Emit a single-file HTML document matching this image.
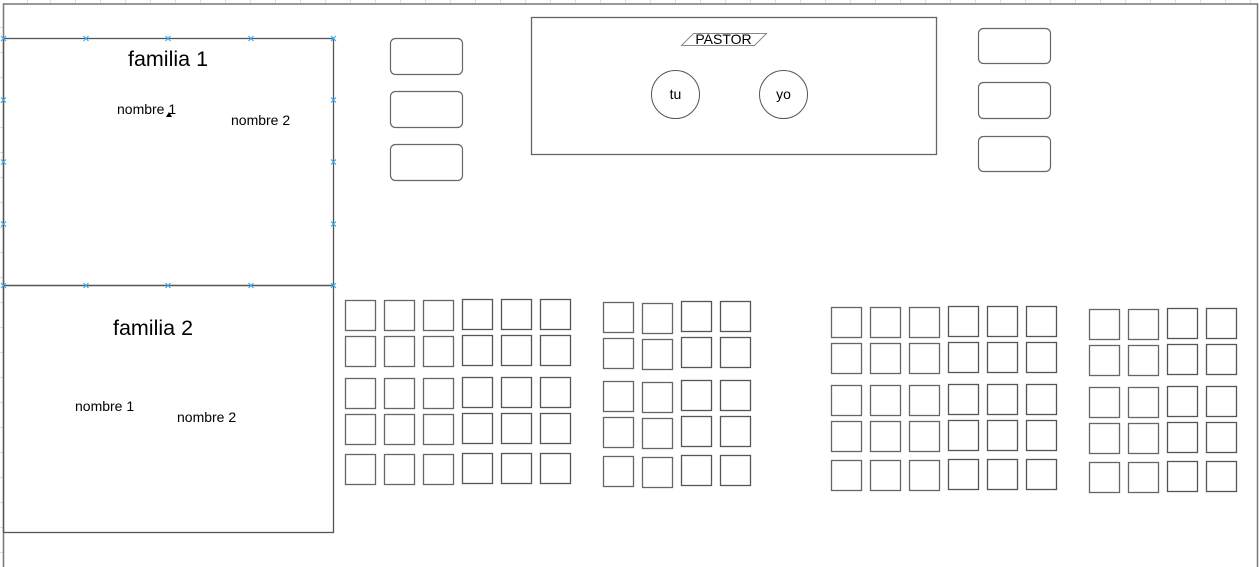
<!DOCTYPE html>
<html><head><meta charset="utf-8"><style>
html,body{margin:0;padding:0;background:#fff;width:1259px;height:567px;overflow:hidden}
svg{display:block}
text{font-family:"Liberation Sans",Arial,sans-serif;fill:#000}
</style></head><body>
<svg width="1259" height="567" viewBox="0 0 1259 567" xmlns="http://www.w3.org/2000/svg">
<defs>
<g id="rA" fill="none" stroke="#666" stroke-width="1.3">
<rect x="345.5" y="1.5" width="30" height="30"/><rect x="384.5" y="1.5" width="30" height="30"/><rect x="423.5" y="1.5" width="30" height="30"/>
<rect x="462.5" y="0.5" width="30" height="30" stroke="#555"/><rect x="501.5" y="0.5" width="30" height="30" stroke="#555"/><rect x="540.5" y="0.5" width="30" height="30" stroke="#555"/>
</g>
<g id="rB" fill="none" stroke="#666" stroke-width="1.3">
<rect x="603.5" y="0.5" width="30" height="30"/><rect x="642.5" y="1.5" width="30" height="30"/>
<rect x="681.5" y="-0.5" width="30" height="30" stroke="#555"/><rect x="720.5" y="-0.5" width="30" height="30" stroke="#555"/>
</g>
<g id="rC" fill="none" stroke="#666" stroke-width="1.3">
<rect x="831.5" y="0.5" width="30" height="30"/><rect x="870.5" y="0.5" width="30" height="30"/><rect x="909.5" y="0.5" width="30" height="30"/>
<rect x="948.5" y="-0.5" width="30" height="30" stroke="#555"/><rect x="987.5" y="-0.5" width="30" height="30" stroke="#555"/><rect x="1026.5" y="-0.5" width="30" height="30" stroke="#555"/>
</g>
<g id="rD" fill="none" stroke="#666" stroke-width="1.3">
<rect x="1089.5" y="0.5" width="30" height="30"/><rect x="1128.5" y="0.5" width="30" height="30"/>
<rect x="1167.5" y="-0.5" width="30" height="30" stroke="#555"/><rect x="1206.5" y="-0.5" width="30" height="30" stroke="#555"/>
</g>
<g id="xm" stroke="#3fa9f5" stroke-width="1.2"><path d="M-2.5,-2.5L2.5,2.5M-2.5,2.5L2.5,-2.5"/></g>
</defs>
<g stroke="#ddd" stroke-width="1">
<path d="M27.5,0V3M50.5,0V3M75.5,0V3M100.5,0V3M125.5,0V3M150.5,0V3M175.5,0V3M200.5,0V3M225.5,0V3M250.5,0V3M275.5,0V3M300.5,0V3M325.5,0V3M350.5,0V3M375.5,0V3M400.5,0V3M425.5,0V3M450.5,0V3M475.5,0V3M500.5,0V3M525.5,0V3M550.5,0V3M575.5,0V3M600.5,0V3M625.5,0V3M650.5,0V3M675.5,0V3M700.5,0V3M725.5,0V3M750.5,0V3M775.5,0V3M800.5,0V3M825.5,0V3M850.5,0V3M875.5,0V3M900.5,0V3M925.5,0V3M950.5,0V3M975.5,0V3M1000.5,0V3M1025.5,0V3M1050.5,0V3M1075.5,0V3M1100.5,0V3M1125.5,0V3M1150.5,0V3M1175.5,0V3M1200.5,0V3M1225.5,0V3M1250.5,0V3"/>
<path d="M0,27.5H3M0,52.5H3M0,77.5H3M0,102.5H3M0,127.5H3M0,152.5H3M0,177.5H3M0,202.5H3M0,227.5H3M0,252.5H3M0,277.5H3M0,302.5H3M0,327.5H3M0,352.5H3M0,377.5H3M0,402.5H3M0,427.5H3M0,452.5H3M0,477.5H3M0,502.5H3M0,527.5H3M0,552.5H3"/>
</g>
<path d="M3.5,567V4H1257.5V567" fill="none" stroke="#777" stroke-width="1.5"/>
<rect x="3.5" y="38.5" width="330" height="247" fill="none" stroke="#555" stroke-width="1.3"/>
<rect x="3.5" y="285.5" width="330" height="247" fill="none" stroke="#555" stroke-width="1.3"/>
<use href="#xm" x="3.5" y="38.5"/><use href="#xm" x="86" y="38.5"/><use href="#xm" x="168" y="38.5"/><use href="#xm" x="251" y="38.5"/><use href="#xm" x="333.5" y="38.5"/>
<use href="#xm" x="3.5" y="285.5"/><use href="#xm" x="86" y="285.5"/><use href="#xm" x="168" y="285.5"/><use href="#xm" x="251" y="285.5"/><use href="#xm" x="333.5" y="285.5"/>
<use href="#xm" x="3.5" y="100"/><use href="#xm" x="3.5" y="162"/><use href="#xm" x="3.5" y="224"/>
<use href="#xm" x="333.5" y="100"/><use href="#xm" x="333.5" y="162"/><use href="#xm" x="333.5" y="224"/>
<text x="168" y="66" font-size="21.5" text-anchor="middle">familia 1</text>
<text x="117" y="114" font-size="14">nombre 1</text>
<path d="M166,117L169,112L172,117Z" fill="#000"/>
<text x="231" y="125" font-size="14">nombre 2</text>
<text x="153" y="335" font-size="21.5" text-anchor="middle">familia 2</text>
<text x="75" y="411" font-size="14">nombre 1</text>
<text x="177" y="422" font-size="14">nombre 2</text>
<g fill="none" stroke="#666" stroke-width="1.2">
<rect x="390.5" y="38.5" width="72" height="36" rx="5"/>
<rect x="390.5" y="91.5" width="72" height="36" rx="5"/>
<rect x="390.5" y="144.5" width="72" height="36" rx="5"/>
<rect x="978.5" y="28.5" width="72" height="35" rx="5"/>
<rect x="978.5" y="82.5" width="72" height="36" rx="5"/>
<rect x="978.5" y="136.5" width="72" height="35" rx="5"/>
</g>
<rect x="531.5" y="17.5" width="405" height="137" fill="none" stroke="#666" stroke-width="1.3"/>
<path d="M693.5,33.5H766.5L754.5,45.5H681.5Z" fill="#fff" stroke="#888" stroke-width="1"/>
<text x="723.5" y="44" font-size="14" text-anchor="middle">PASTOR</text>
<circle cx="675.5" cy="94.5" r="24" fill="none" stroke="#555" stroke-width="1"/>
<circle cx="783.5" cy="94.5" r="24" fill="none" stroke="#555" stroke-width="1"/>
<text x="675.5" y="99" font-size="14" text-anchor="middle">tu</text>
<text x="783.5" y="99" font-size="14" text-anchor="middle">yo</text>
<use href="#rA" y="299"/><use href="#rA" y="335"/><use href="#rA" y="377"/><use href="#rA" y="413"/><use href="#rA" y="453"/>
<use href="#rB" y="302"/><use href="#rB" y="338"/><use href="#rB" y="381"/><use href="#rB" y="417"/><use href="#rB" y="456"/>
<use href="#rC" y="307"/><use href="#rC" y="343"/><use href="#rC" y="385"/><use href="#rC" y="421"/><use href="#rC" y="460"/>
<use href="#rD" y="309"/><use href="#rD" y="345"/><use href="#rD" y="387"/><use href="#rD" y="423"/><use href="#rD" y="462"/>
</svg>
</body></html>
